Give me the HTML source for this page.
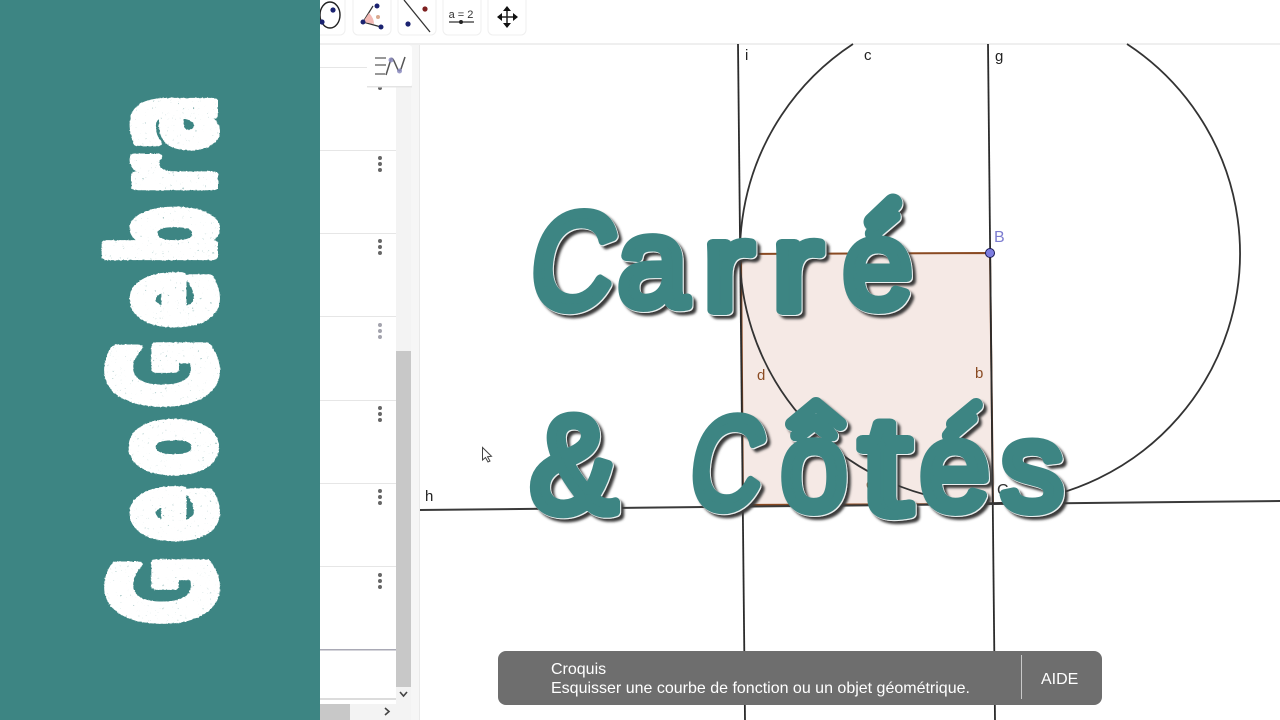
<!DOCTYPE html>
<html><head><meta charset="utf-8"><style>
html,body{margin:0;padding:0;background:#fff}
#p{position:relative;width:1280px;height:720px;overflow:hidden;background:#fff;font-family:"Liberation Sans",sans-serif}
svg{position:absolute;left:0;top:0}
.ttl text{font-family:"Liberation Sans",sans-serif;fill:#3d8583;stroke:#3d8583;stroke-width:10;stroke-linejoin:round;stroke-linecap:round}
.ttl path{fill:none;stroke:#3d8583;stroke-linecap:round;stroke-linejoin:round}
.geo text{font-family:"DejaVu Sans",sans-serif;font-weight:bold;font-size:140px;fill:#fff;stroke:#fff;stroke-width:10;stroke-linejoin:round}
.lb{font-family:"Liberation Sans",sans-serif;font-size:15px}
</style></head><body><div id="p">
<svg width="1280" height="720" viewBox="0 0 1280 720">
<defs>
<filter id="sp" x="-5%" y="-5%" width="110%" height="110%">
<feTurbulence type="fractalNoise" baseFrequency="0.4" numOctaves="2" seed="7" result="n"/>
<feDisplacementMap in="SourceGraphic" in2="n" scale="2" xChannelSelector="G" yChannelSelector="B" result="d"/>
<feColorMatrix in="n" type="matrix" values="0 0 0 0 0 0 0 0 0 0 0 0 0 0 0 4 0 0 0 -2.88" result="m"/>
<feComposite in="d" in2="m" operator="out"/>
</filter>
<filter id="sh" x="-10%" y="-10%" width="120%" height="120%">
<feDropShadow dx="1" dy="1" stdDeviation="0" flood-color="#e8f0f0"/>
<feDropShadow dx="3" dy="3" stdDeviation="1.2" flood-color="#3a3a3a"/>
</filter>
</defs>

<!-- toolbar -->
<rect x="320" y="0" width="960" height="43" fill="#fff"/>
<rect x="320" y="43" width="960" height="2" fill="#efefef"/>
<g fill="#fff" stroke="#efefef">
<rect x="300" y="-8" width="45" height="43" rx="5"/>
<rect x="353" y="-8" width="38" height="43" rx="5"/>
<rect x="398" y="-8" width="38" height="43" rx="5"/>
<rect x="443" y="-8" width="38" height="43" rx="5"/>
<rect x="488" y="-8" width="38" height="43" rx="5"/>
</g>
<ellipse cx="330" cy="15" rx="10" ry="13" fill="none" stroke="#222" stroke-width="1.4"/>
<circle cx="333" cy="10" r="2.6" fill="#1a2270"/><circle cx="322" cy="22" r="2.6" fill="#1a2270"/>
<path d="M363 22L373 6M363 22L381 27" stroke="#333" stroke-width="1.2" fill="none"/>
<path d="M363 22L369 13Q374 18 374 24Z" fill="#f3b9b4"/>
<circle cx="378" cy="17" r="2" fill="#d9a98f"/>
<circle cx="363" cy="22" r="2.5" fill="#1a2270"/><circle cx="377" cy="6" r="2.5" fill="#1a2270"/><circle cx="381" cy="27" r="2.5" fill="#1a2270"/>
<path d="M404 0L430 32" stroke="#333" stroke-width="1.3"/>
<circle cx="425" cy="9" r="2.6" fill="#7d2020"/><circle cx="408" cy="24" r="2.6" fill="#1a2270"/>
<text x="461" y="18" text-anchor="middle" font-size="11" fill="#333" font-family="Liberation Sans">a = 2</text>
<path d="M449 22H474" stroke="#333" stroke-width="1.2"/><circle cx="461" cy="22" r="2" fill="#222"/>
<path d="M507 8V26M498 17H516" stroke="#222" stroke-width="1.5"/>
<path d="M507 6l-4 5h8zM507 28l-4-5h8zM497 17l5-4v8zM518 17l-5-4v8z" fill="#111"/>

<!-- algebra panel -->
<g fill="#e6e6e6">
<rect x="320" y="67" width="76" height="1"/>
<rect x="320" y="150" width="76" height="1"/>
<rect x="320" y="233" width="76" height="1"/>
<rect x="320" y="316" width="76" height="1"/>
<rect x="320" y="400" width="76" height="1"/>
<rect x="320" y="483" width="76" height="1"/>
<rect x="320" y="566" width="76" height="1"/>
</g>
<rect x="320" y="649" width="76" height="1.5" fill="#a9a9b5"/>
<rect x="320" y="698" width="76" height="2" fill="#dcdcdc"/>
<rect x="396" y="45" width="15" height="659" fill="#f3f3f3"/>
<rect x="396" y="351" width="15" height="336" fill="#c8c8c8"/>
<rect x="411" y="45" width="9" height="675" fill="#f6f6f6"/>
<rect x="419" y="45" width="1" height="675" fill="#e9e9e9"/>
<rect x="320" y="704" width="91" height="16" fill="#f3f3f3"/>
<rect x="320" y="704" width="30" height="16" fill="#c8c8c8"/>
<path d="M400 692l3.5 4 3.5-4" fill="none" stroke="#444" stroke-width="1.6"/>
<path d="M385 708l4 3.5-4 3.5" fill="none" stroke="#444" stroke-width="1.6"/>
<g fill="#666">
<circle cx="380" cy="88" r="2"/>
<circle cx="380" cy="158" r="2"/><circle cx="380" cy="164" r="2"/><circle cx="380" cy="170" r="2"/>
<circle cx="380" cy="241" r="2"/><circle cx="380" cy="247" r="2"/><circle cx="380" cy="253" r="2"/>
<circle cx="380" cy="408" r="2"/><circle cx="380" cy="414" r="2"/><circle cx="380" cy="420" r="2"/>
<circle cx="380" cy="491" r="2"/><circle cx="380" cy="497" r="2"/><circle cx="380" cy="503" r="2"/>
<circle cx="380" cy="575" r="2"/><circle cx="380" cy="581" r="2"/><circle cx="380" cy="587" r="2"/>
</g>
<g fill="#a3a3ad"><circle cx="380" cy="325" r="2"/><circle cx="380" cy="331" r="2"/><circle cx="380" cy="337" r="2"/></g>
<rect x="367" y="45" width="45" height="42" rx="3" fill="#fff"/>
<rect x="367" y="86" width="45" height="1.5" fill="#e4e4e4"/>
<path d="M375 58H386M375 65H386M375 74H385" stroke="#8a8a8a" stroke-width="1.8"/>
<path d="M386 75L391 59Q392 57 394 61L398 70Q400 72 401 69L405 57" fill="none" stroke="#555" stroke-width="1.5"/>
<circle cx="391" cy="60" r="2.5" fill="#8c8cc0" opacity=".85"/><circle cx="399.5" cy="71" r="2.5" fill="#8c8cc0" opacity=".85"/>

<!-- graphics -->
<path d="M741 254L990 253L993 504L743 505Z" fill="#f5e9e5" stroke="#8a4a22" stroke-width="2"/>
<g fill="none" stroke="#2b2b2b">
<path d="M738 44L745 720" stroke-width="1.8"/>
<path d="M988 44L995 720" stroke-width="1.8"/>
<path d="M420 510L1280 501" stroke="#3a3a3a" stroke-width="2"/>
<path d="M853 44A250 250 0 1 0 1127 44" stroke-width="1.8" stroke="#333"/>
</g>
<circle cx="990" cy="253" r="4.5" fill="#7d7de0" stroke="#1b1b55" stroke-width="1"/>
<g class="lb">
<text x="745" y="60" fill="#222">i</text>
<text x="864" y="60" fill="#222">c</text>
<text x="995" y="61" fill="#222">g</text>
<text x="425" y="501" fill="#222">h</text>
<text x="994" y="242" fill="#7d7dd0" font-size="16">B</text>
<text x="757" y="380" fill="#8a4a22">d</text>
<text x="975" y="378" fill="#8a4a22">b</text>
<text x="866" y="489" fill="#8a4a22">c</text>
<text x="997" y="495" fill="#333" font-size="16">C</text>
</g>
<path d="M482.5 447.5V460L485.5 457.500L488 462L490 461L487.500 456.800L491.500 456.300Z" fill="#fff" stroke="#444" stroke-width="1"/>

<!-- snackbar -->
<rect x="498" y="651" width="604" height="54" rx="8" fill="#6e6e6e"/>
<rect x="1021" y="655" width="1" height="44" fill="#c9c9c9"/>
<text x="551" y="674" font-family="Liberation Sans" font-size="16" fill="#fff">Croquis</text>
<text x="551" y="693" font-family="Liberation Sans" font-size="16" fill="#fff">Esquisser une courbe de fonction ou un objet géométrique.</text>
<text x="1041" y="684" font-family="Liberation Sans" font-size="16" fill="#fff">AIDE</text>

<!-- sidebar -->
<rect x="0" y="0" width="320" height="720" fill="#3d8583"/>
<g class="geo" filter="url(#sp)">
<text transform="translate(213 625) rotate(-90) scale(.6 1)" font-size="154">G</text>
<text transform="translate(213 542) rotate(-90) scale(.6 1)">e</text>
<text transform="translate(212 476) rotate(-90) scale(.6 1)">o</text>
<text transform="translate(213 408) rotate(-90) scale(.6 1)" font-size="154">G</text>
<text transform="translate(213 328) rotate(-90) scale(.6 1)">e</text>
<text transform="translate(213 264) rotate(-90) scale(.58 1)">b</text>
<text transform="translate(213 194) rotate(-90) scale(.55 1)">r</text>
<text transform="translate(213 151) rotate(-90) scale(.6 1)">a</text>
</g>

<!-- title -->
<g class="ttl" filter="url(#sh)">
<text font-size="136" stroke-width="9" transform="translate(526 308) skewX(-8) scale(.84 1)">C</text>
<text font-size="125" transform="translate(618 306)">a</text>
<text font-size="125" transform="translate(703 310) scale(1.2 1)">r</text>
<text font-size="125" transform="translate(772 310) scale(1.2 1)">r</text>
<text font-size="125" transform="translate(843 308)">é</text>
<path d="M873 222L893 203" stroke-width="19"/>
<text font-size="138" stroke-width="8" transform="translate(530 512) scale(.95 1)">&amp;</text>
<text font-size="130" stroke-width="9" transform="translate(686 508) skewX(-8) scale(.76 1)">C</text>
<text font-size="125" transform="translate(781 510) scale(.95 1)">ô</text>
<path d="M792 424L816 404L840 424" stroke-width="14"/>
<text font-size="140" stroke-width="9" transform="translate(860 514) scale(1.3 1)">t</text>
<text font-size="125" transform="translate(920 510)">é</text>
<path d="M953 424L976 405" stroke-width="14"/>
<text font-size="125" transform="translate(1001 510)">s</text>
</g>
</svg>
</div></body></html>
